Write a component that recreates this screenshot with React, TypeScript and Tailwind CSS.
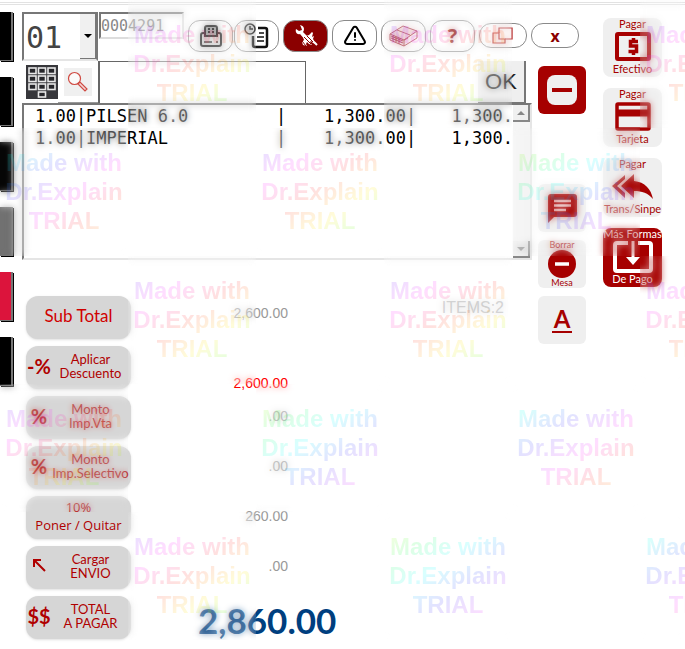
import React, { useState } from "react";
import { clsx } from "clsx";
import { TbAlertTriangle } from "react-icons/tb";

const GOTHIC = "font-[Century_Gothic,Lato,sans-serif]";
const MONO = "font-[Consolas,DejaVu_Sans_Mono,monospace]";

const lines = [
  { qty: "1.00", name: "PILSEN 6.0", price: "1,300.00", total: "1,300." },
  { qty: "1.00", name: "IMPERIAL", price: "1,300.00", total: "1,300." },
];

const categories = ["bg-black", "bg-black", "bg-black", "bg-[#6e6e6e]", "bg-[#dc143c]", "bg-black"];

const violet = "bg-[linear-gradient(145deg,#5030ff_10%,#ff20ff_32%,#ff3030_52%,#ffe800_72%,#30ff30_92%)]";
const cyan = "bg-[linear-gradient(145deg,#00ffe8_18%,#4040ff_38%,#ff20ff_60%,#ff3030_76%,#ffc800_96%)]";
const green = "bg-[linear-gradient(145deg,#a0ff20_14%,#20ff50_28%,#00ffff_46%,#4040ff_66%,#ff20ff_90%)]";

// one entry per stamped tile, row by row
const sheens = [
  [null, violet, null, violet, null, violet],
  [cyan, null, violet, null, green, null],
  [null, violet, null, violet, null, violet],
  [violet, null, green, null, cyan, null],
  [null, violet, null, green, null, cyan],
];

function PrinterIcon() {
  return (
    <svg width="24" height="24" viewBox="0 0 24 24" fill="none" stroke="#111" strokeWidth="2">
      <path d="M6 12V4a2 2 0 0 1 2-2h8a2 2 0 0 1 2 2v8z" fill="#ccc" />
      <path d="M9 5h2M13 5h2M9 8h2M13 8h2" />
      <path d="M6 9H4a2 2 0 0 0-2 2v9a2 2 0 0 0 2 2h16a2 2 0 0 0 2-2v-9a2 2 0 0 0-2-2h-2M6 12h12" />
      <path d="M5 18h8M17 18h2" strokeWidth="1.5" />
    </svg>
  );
}

function HistoryIcon() {
  return (
    <svg width="30" height="26" viewBox="0 0 30 26" fill="none" stroke="#111" strokeWidth="1.5">
      <path d="M16 5h7a2 2 0 0 1 2 2v15a2 2 0 0 1-2 2H13a2 2 0 0 1-2-2v-9" strokeWidth="2.5" />
      <circle cx="8" cy="6" r="5" fill="#f4f4f4" />
      <path d="M8 3v3h3M17 10h5M15 14h7M15 18h7" />
    </svg>
  );
}

function ToolsIcon() {
  return (
    <svg width="24" height="24" viewBox="0 0 24 24">
      <path d="M6 1c4 1 5 4 3 7l6 6-3 3-6-7C3 11 1 8 2 5l3 2 3-1-1-3z" fill="#fff" />
      <path d="M15 11l3-3 1 1-1 4 2-1-1 3 2 3 1 2-3-1-2-2-1 1 2 3-3-1-2-2-1 2 1 2-4-1-1-3 2-2-1-3z" fill="#fff" />
      <path d="M10 13l7 7M13 12l6 6M8 17l4 5" stroke="#8b0000" fill="none" />
      <path d="M20 18l3 3" stroke="#fff" strokeWidth="2" />
    </svg>
  );
}

function BoxIcon() {
  return (
    <svg width="30" height="22" viewBox="0 0 30 22" fill="none" stroke="#a02030" strokeWidth="1">
      <path d="M1 9L14 1l14 5-13 9z" fill="#f6e9e9" />
      <path d="M1 9v6l14 6v-6M28 6v7l-13 8" />
      <path d="M2 11l12 5M2 13l12 5M4 11v5M7 12v5M10 13v6M8 5l13 5M15 15l4-2" />
    </svg>
  );
}

function WindowsIcon() {
  return (
    <svg width="22" height="18" viewBox="0 0 22 18" fill="none" stroke="#b01515" strokeWidth="1.2">
      <path d="M7 6V1h13v11h-7" />
      <path d="M7 6H1v10h12v-4H7z" />
    </svg>
  );
}

function KeypadIcon() {
  return (
    <svg width="32" height="34" viewBox="0 0 32 34">
      <rect width="32" height="34" fill="#37373b" />
      <g fill="#26262a" stroke="#e8e8e8" strokeWidth="1.6">
        {[3, 11, 19].map((y) => [3, 12.5, 22].map((x) => <rect key={`${x}-${y}`} x={x} y={y} width="7" height="5.5" />))}
        <rect x="12.5" y="27" width="7" height="5" />
      </g>
    </svg>
  );
}

function SearchIcon() {
  return (
    <svg width="22" height="22" viewBox="0 0 22 22" fill="none" stroke="#cf4a42" strokeWidth="1.2">
      <circle cx="7.5" cy="7.5" r="6" fill="#fafafa" />
      <path d="M11 13l2-2 7 7-2 2z" fill="#f3d6d6" />
    </svg>
  );
}

function CashIcon() {
  return (
    <svg width="36" height="29" viewBox="0 0 36 29" fill="none" stroke="#a60000">
      <rect x="2" y="2" width="32" height="25" rx="1" strokeWidth="4" />
      <path d="M23 9.500h-7.500v4.500H21.500v5.500h-8M18.500 6v3.500M18.500 19.500V23" strokeWidth="3.500" />
    </svg>
  );
}

function CardIcon() {
  return (
    <svg width="36" height="29" viewBox="0 0 36 29" fill="none" stroke="#a60000">
      <rect x="2" y="2" width="32" height="25" rx="1" strokeWidth="3.5" />
      <path d="M2 11h32" strokeWidth="7" />
    </svg>
  );
}

function ReplyIcon() {
  return (
    <svg width="42" height="26" viewBox="0 0 42 26" fill="#a60000">
      <path d="M13 1v4L5 12l8 7v5L0 12z" />
      <path d="M22 0v7c11 1 17 8 19 18-5-6-11-8-19-8v7L9 12z" />
    </svg>
  );
}

function MoreIcon() {
  return (
    <svg width="40" height="32" viewBox="0 0 40 32" fill="none" stroke="#fff" strokeWidth="4">
      <path d="M15 2H4a2 2 0 0 0-2 2v24a2 2 0 0 0 2 2h32a2 2 0 0 0 2-2V4a2 2 0 0 0-2-2H25" />
      <path d="M20 0v17" strokeWidth="3" />
      <path d="M13 16h14l-7 8z" fill="#fff" stroke="none" />
    </svg>
  );
}

function CommentIcon() {
  return (
    <svg width="29" height="29" viewBox="0 0 29 29">
      <path d="M3 0h23a3 3 0 0 1 3 3v17a3 3 0 0 1-3 3H6l-6 6V3a3 3 0 0 1 3-3z" fill="#a60000" />
      <path d="M6 7h17M6 11.500h17M6 16h12" stroke="#fff" strokeWidth="2.500" />
    </svg>
  );
}

function MinusCircle() {
  return (
    <svg width="28" height="28" viewBox="0 0 28 28">
      <circle cx="14" cy="14" r="14" fill="#a60000" />
      <path d="M7 14h14" stroke="#fff" strokeWidth="3.5" />
    </svg>
  );
}

function CursorIcon() {
  return (
    <svg className="mx-auto" width="13" height="13" viewBox="0 0 13 13" fill="none" stroke="#b00000" strokeWidth="2">
      <path d="M1 8V1h7M1 1l11 11" />
    </svg>
  );
}

type ToolProps = { label: string; small?: boolean; active?: boolean; children: React.ReactNode };

function ToolButton({ label, small, active, children }: ToolProps) {
  return (
    <button
      aria-label={label}
      className={clsx(
        "flex shrink-0 items-center justify-center rounded-xl border border-[#8a8a8a] font-[Open_Sans,sans-serif] font-bold text-[#8b0000]",
        small ? "h-[25px] w-12 text-base" : "h-8 w-[45px] text-xl",
        active ? "bg-[#8b0000]" : "bg-white"
      )}
    >
      {children}
    </button>
  );
}

type PayProps = { top: string; bottom: string; dark?: boolean; children: React.ReactNode };

function PayButton({ top, bottom, dark, children }: PayProps) {
  return (
    <button
      className={clsx(
        GOTHIC,
        "flex h-[59px] w-[59px] flex-col items-center justify-between whitespace-nowrap rounded-lg text-[11px] leading-3",
        dark ? "bg-[#a60000] text-white" : "bg-[#efefef] text-[#a60000]"
      )}
    >
      <span>{top}</span>
      {children}
      <span className="pb-0.5">{bottom}</span>
    </button>
  );
}

type SummaryProps = { icon?: React.ReactNode; label: React.ReactNode; value: string; valueClass?: string; labelClass?: string };

function SummaryRow({ icon, label, value, valueClass, labelClass }: SummaryProps) {
  return (
    <div className="flex h-[43px]">
      <button className={clsx(GOTHIC, "flex w-[105px] shrink-0 items-center rounded-xl bg-[#d6d6d6] pb-1 text-[#b00000] shadow-sm")}>
        {icon && <span className="w-[26px] shrink-0 text-center text-[20px] font-bold">{icon}</span>}
        <span className={clsx("flex flex-1 justify-center whitespace-nowrap text-center", icon && "pr-0.5", labelClass || "text-[13px] leading-[14px]")}>
          <span>{label}</span>
        </span>
      </button>
      <output className={clsx("flex w-[157px] justify-end text-sm", valueClass || "items-center pb-1 text-[#999]")}>{value}</output>
    </div>
  );
}

function Watermark() {
  return (
    <div aria-hidden="true" className="pointer-events-none absolute inset-0 grid auto-rows-[128px] grid-cols-[repeat(6,128px)] overflow-hidden">
      {sheens.flat().map((sheen, i) =>
        sheen ? (
          <div key={i} className="relative">
            <div className="absolute inset-0 bg-white/5 opacity-50 backdrop-blur-[3px]" />
            <p className={clsx("relative bg-clip-text pt-5 text-center text-2xl leading-[29px] font-bold text-transparent opacity-15", sheen)}>
              Made with
              <br />
              Dr.Explain
              <br />
              TRIAL
            </p>
          </div>
        ) : (
          <div key={i} />
        )
      )}
    </div>
  );
}

export default function App() {
  const [code, setCode] = useState("");

  return (
    <div className="relative min-h-screen overflow-hidden bg-white font-[Liberation_Sans,Arial,sans-serif]">
      <div className="h-3 pt-0.5">
        <div className="h-[3px] border-y border-[#e2e2e2]" />
      </div>
      <div className="flex items-start">
        <nav className="flex w-[13px] shrink-0 flex-col gap-4">
          {categories.map((c, i) => (
            <button key={i} aria-label={`Categoría ${i + 1}`} className={clsx("h-[49px] border-r-2 border-b border-[#777] shadow-[1px_1px_0_#000]", c)} />
          ))}
        </nav>

        <main className="ml-[9px] w-[564px] shrink-0">
          <header className="flex h-[49px] items-start">
            <div className="relative h-[49px] w-[76px] shrink-0 border-2 border-[#777] border-b-[#e5e5e5] bg-white">
              <select aria-label="Mesa" className={clsx(MONO, "h-full w-full appearance-none pt-0.5 pl-0.5 text-[30px] leading-none text-[#444]")}>
                <option>01</option>
              </select>
              <span className="pointer-events-none absolute inset-y-0 right-0 flex w-4 items-center justify-center border-r border-b border-[#777] bg-[#f0f0f0]">
                <svg width="8" height="4" viewBox="0 0 8 4"><path d="M0 0h8L4 4z" /></svg>
              </span>
            </div>
            <input
              aria-label="Factura"
              readOnly
              value="0004291"
              className={clsx(MONO, "ml-px h-[27px] w-[85px] border-2 border-[#777] border-r-[#ddd] border-b-[#ddd] text-[15px] text-[#888]")}
            />
            <div className="ml-1 flex h-[47px] items-center gap-1">
              <div className="flex gap-px">
                <ToolButton label="Imprimir"><PrinterIcon /></ToolButton>
                <ToolButton label="Historial"><HistoryIcon /></ToolButton>
              </div>
              <ToolButton label="Herramientas" active><ToolsIcon /></ToolButton>
              <ToolButton label="Alerta"><TbAlertTriangle className="size-6 text-black" /></ToolButton>
              <ToolButton label="Caja"><BoxIcon /></ToolButton>
              <ToolButton label="Ayuda">?</ToolButton>
              <ToolButton label="Ventanas" small><WindowsIcon /></ToolButton>
              <ToolButton label="Cerrar" small>x</ToolButton>
            </div>
          </header>

          <div className="flex justify-between">
            <section className="w-[510px]">
              <div className="flex h-[42px]">
                <button aria-label="Teclado" className="ml-1"><KeypadIcon /></button>
                <button aria-label="Buscar" className="flex w-10 items-center justify-center border-b border-[#999]">
                  <span className="flex size-7 items-center justify-center bg-[#f0f0f0]"><SearchIcon /></span>
                </button>
                <input
                  aria-label="Código"
                  value={code}
                  onChange={(e) => setCode(e.target.value)}
                  className="w-[208px] border border-b-0 border-l-2 border-[#666] px-1 outline-none"
                />
                <button className="mr-[6px] ml-auto w-12 border-r-2 border-b border-[#777] bg-[#efefef] text-[22px] text-[#222]">OK</button>
              </div>

              <div className="flex h-[157px] border-2 border-[#777] border-r-[#e5e5e5] border-b-[#e5e5e5]">
                <div className="flex-1 overflow-hidden">
                  <table className={clsx(MONO, "w-full table-fixed text-[17px] leading-[22px]")}>
                    <tbody>
                      {lines.map((l) => (
                        <tr key={l.name}>
                          <td className="w-[52px] text-right">{l.qty}</td>
                          <td className="w-[10px]">|</td>
                          <td className="w-[190px]">{l.name}</td>
                          <td className="w-[10px]">|</td>
                          <td className="w-[120px] text-right">{l.price}</td>
                          <td className="w-[10px]">|</td>
                          <td className="text-right">{l.total}</td>
                        </tr>
                      ))}
                    </tbody>
                  </table>
                </div>
                <div className="flex w-[17px] flex-col justify-between bg-[#f5f5f5]">
                  <button aria-label="Subir" className="flex h-[17px] items-center justify-center border-r-2 border-b-2 border-[#888] bg-[#f0f0f0]">
                    <svg width="8" height="4" viewBox="0 0 8 4" fill="#888"><path d="M0 4h8L4 0z" /></svg>
                  </button>
                  <button aria-label="Bajar" className="flex h-[17px] items-center justify-center border-r-2 border-b-2 border-[#888] bg-[#f0f0f0]">
                    <svg width="8" height="4" viewBox="0 0 8 4" fill="#888"><path d="M0 0h8L4 4z" /></svg>
                  </button>
                </div>
              </div>

              <div className="flex items-start justify-between pt-9 pr-7 pl-1">
                <div className="flex flex-col gap-[7px]">
                  <SummaryRow label="Sub Total" labelClass="text-[17px] text-[#d00000]" value="2,600.00" valueClass="pt-[7px] text-[#999]" />
                  <SummaryRow icon="-%" label={<>Aplicar<br />Descuento</>} value="2,600.00" valueClass="items-end leading-3 text-[#f00]" />
                  <SummaryRow icon="%" label={<>Monto<br />Imp.Vta</>} value=".00" />
                  <SummaryRow icon="%" label={<>Monto<br />Imp.Selectivo</>} value=".00" />
                  <SummaryRow label={<>10%<br />Poner / Quitar</>} labelClass="font-[Open_Sans,sans-serif] text-[13px] leading-[18px]" value="260.00" />
                  <SummaryRow icon={<CursorIcon />} label={<>Cargar<br />ENVIO</>} value=".00" />
                  <SummaryRow icon="$$" label={<>TOTAL<br />A PAGAR</>} value="" />
                </div>
                <output className="text-base text-[#b5b5b5]">ITEMS:2</output>
              </div>
              <output className={clsx(GOTHIC, "-mt-10 block pl-[176px] text-[35px] leading-[43px] font-bold text-[#003f7f]")}>2,860.00</output>
            </section>

            <aside className="flex w-12 flex-col gap-2 pt-[5px]">
              <button aria-label="Quitar" className="mb-[62px] flex h-12 items-center justify-center rounded-md bg-[#a60000]">
                <span className="flex size-[30px] items-center justify-center rounded-lg bg-[#f0f0f0]"><span className="h-1 w-5 bg-[#a60000]" /></span>
              </button>
              <button aria-label="Comentario" className="flex h-12 items-center justify-center rounded-md bg-[#efefef]"><CommentIcon /></button>
              <button className={clsx(GOTHIC, "flex h-12 flex-col items-center justify-between rounded-md bg-[#efefef] text-[9px] leading-[10px] text-[#a60000]")}>
                Borrar<MinusCircle />Mesa
              </button>
              <button className={clsx(GOTHIC, "flex h-12 items-center justify-center rounded-md bg-[#efefef] text-2xl font-bold text-[#a60000]")}>
                <span className="border-b-2 px-0.5 leading-6">A</span>
              </button>
            </aside>
          </div>
        </main>

        <aside className="ml-[17px] flex flex-col gap-[11px] pt-[6px]">
          <PayButton top="Pagar" bottom="Efectivo"><CashIcon /></PayButton>
          <PayButton top="Pagar" bottom="Tarjeta"><CardIcon /></PayButton>
          <PayButton top="Pagar" bottom="Trans/Sinpe"><ReplyIcon /></PayButton>
          <PayButton top="Más Formas" bottom="De Pago" dark><MoreIcon /></PayButton>
        </aside>
      </div>
      <Watermark />
    </div>
  );
}
